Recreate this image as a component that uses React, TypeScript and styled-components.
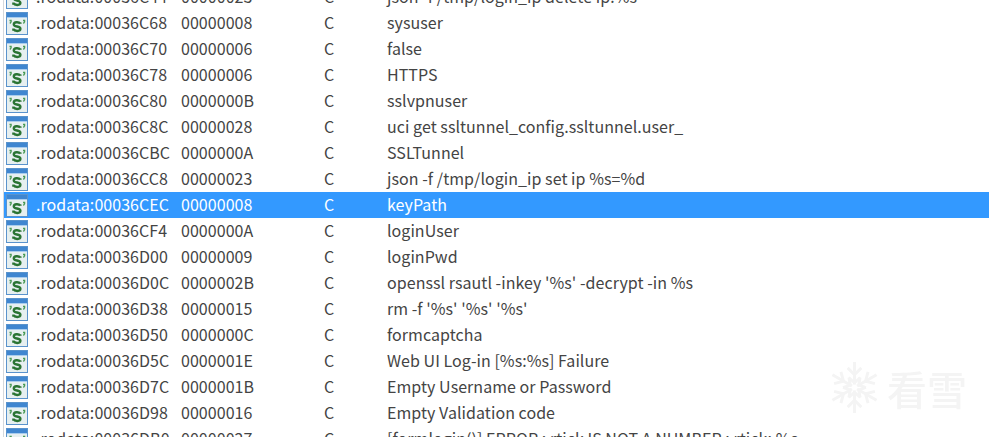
import React from 'react';
import styled, { createGlobalStyle } from 'styled-components';

const GlobalStyle = createGlobalStyle`
  html, body {
    margin: 0;
    padding: 0;
    background: #fff;
    overflow: hidden;
  }
`;

const Page = styled.div`
  position: relative;
  width: 989px;
  height: 437px;
  overflow: hidden;
  background: #fff;
  font-family: 'Noto Sans CJK SC', 'Noto Sans', sans-serif;
  font-size: 16px;
  letter-spacing: 0.05px;
  color: #444;
`;

const List = styled.div`
  margin: -16px 0 0 3px;
  border-left: 1px solid #d4d8dc;
`;

const Row = styled.div<{ $selected?: boolean }>`
  display: grid;
  grid-template-columns: 32px 145px 143px 63px 1fr;
  align-items: center;
  height: 26px;
  white-space: nowrap;
  background: ${(p) => (p.$selected ? '#3399ff' : 'transparent')};
  color: ${(p) => (p.$selected ? '#fff' : '#444')};
`;

const IconCell = styled.div`
  display: flex;
  padding-left: 2px;
`;

const Label = styled.span`
  padding-bottom: 2px;
`;

const Watermark = styled.div`
  position: absolute;
  left: 830px;
  top: 360px;
  display: flex;
  align-items: center;
  gap: 8px;
  color: #f4f4f4;
  font-size: 40px;
  font-weight: 500;
  line-height: 1;
  letter-spacing: 0;
  filter: blur(0.6px);
`;

function StringIcon() {
  return (
    <svg width="22" height="23" viewBox="0 0 22 23">
      <rect x="0.5" y="0.5" width="21" height="22" fill="#e6eff0" stroke="#5a93cc" />
      <rect x="1" y="1" width="20" height="4" fill="#3f86d0" />
      <rect x="1" y="5" width="20" height="1" fill="#a9cdee" />
      <path d="M3.5 8.5 h1.6 v1.4 l-1.2 1.6" fill="none" stroke="#4a9a55" strokeWidth="1.3" />
      <path d="M17 8.5 h1.6 v1.4 l-1.2 1.6" fill="none" stroke="#4a9a55" strokeWidth="1.3" />
      <path
        d="M14.4 11.8 V10.4 M14.2 11.5 C13 9.8 7.8 9.6 7.8 12.4 C7.8 15.2 14.4 13.8 14.4 16.8 C14.4 19.6 8.8 19.6 7.4 17.2 M7.4 18.8 V16.6"
        fill="none"
        stroke="#2a7433"
        strokeWidth="2.4"
      />
    </svg>
  );
}

function Snowflake() {
  const arms = [0, 60, 120, 180, 240, 300];
  return (
    <svg width="49" height="55" viewBox="-25 -28 50 56">
      {arms.map((a) => (
        <g key={a} transform={`rotate(${a})`} stroke="#f4f4f4" strokeWidth="3" fill="none">
          <path d="M0 -3 V-26" />
          <path d="M-7 -20 L0 -13 L7 -20" />
          <path d="M-6 -10 L0 -5 L6 -10" />
        </g>
      ))}
    </svg>
  );
}

const rows: [string, string, string][] = [
  ['00036C44', '00000023', 'json -f /tmp/login_ip delete ip:%s'],
  ['00036C68', '00000008', 'sysuser'],
  ['00036C70', '00000006', 'false'],
  ['00036C78', '00000006', 'HTTPS'],
  ['00036C80', '0000000B', 'sslvpnuser'],
  ['00036C8C', '00000028', 'uci get ssltunnel_config.ssltunnel.user_'],
  ['00036CBC', '0000000A', 'SSLTunnel'],
  ['00036CC8', '00000023', 'json -f /tmp/login_ip set ip %s=%d'],
  ['00036CEC', '00000008', 'keyPath'],
  ['00036CF4', '0000000A', 'loginUser'],
  ['00036D00', '00000009', 'loginPwd'],
  ['00036D0C', '0000002B', "openssl rsautl -inkey '%s' -decrypt -in %s"],
  ['00036D38', '00000015', "rm -f '%s' '%s' '%s'"],
  ['00036D50', '0000000C', 'formcaptcha'],
  ['00036D5C', '0000001E', 'Web UI Log-in [%s:%s] Failure'],
  ['00036D7C', '0000001B', 'Empty Username or Password'],
  ['00036D98', '00000016', 'Empty Validation code'],
  ['00036DB0', '00000027', '[formlogin()] ERROR : rtick IS NOT A NUMBER : rtick: %s'],
];

export default function App() {
  return (
    <Page>
      <GlobalStyle />
      <List>
        {rows.map(([addr, len, text]) => (
          <Row key={addr} $selected={addr === '00036CEC'}>
            <IconCell>
              <StringIcon />
            </IconCell>
            <Label>.rodata:{addr}</Label>
            <Label>{len}</Label>
            <Label>C</Label>
            <Label>{text}</Label>
          </Row>
        ))}
      </List>
      <Watermark>
        <Snowflake />
        <span>看雪</span>
      </Watermark>
    </Page>
  );
}
